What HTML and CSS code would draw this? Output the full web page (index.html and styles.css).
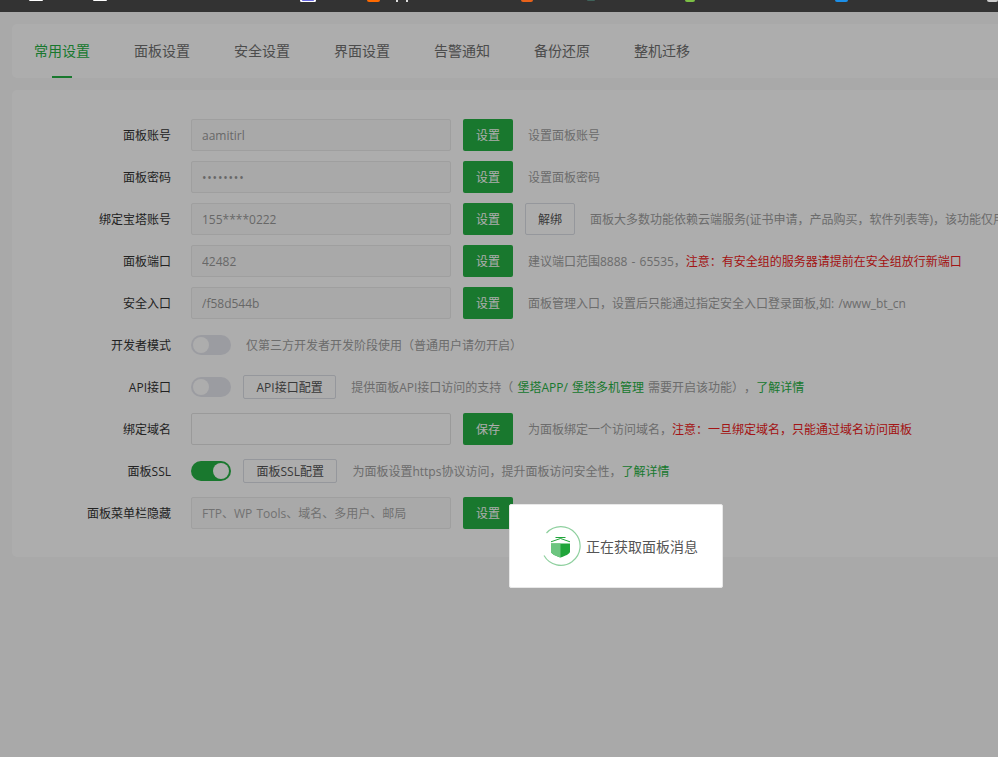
FILE: index.html
```html
<!DOCTYPE html>
<html lang="en">

<head>
    <meta charset="UTF-8">
    <meta name="viewport" content="width=device-width, initial-scale=1.0">
    <title>面板设置</title>
    <link rel="stylesheet" href="styles.css">
</head>

<body>
    <div class="browser-bar">
        <span class="fav fav-white fav-a"></span>
        <span class="fav fav-white fav-b"></span>
        <span class="fav fav-blue"></span>
        <span class="fav fav-orange"></span>
        <span class="fav fav-tick fav-tick-a"></span>
        <span class="fav fav-tick fav-tick-b"></span>
        <span class="fav fav-ring"></span>
        <span class="fav fav-dark"></span>
        <span class="fav fav-green"></span>
        <span class="fav fav-sky"></span>
        <span class="fav fav-grey"></span>
    </div>

    <div class="page">
        <div class="tabs">
            <a class="tab active">常用设置</a>
            <a class="tab">面板设置</a>
            <a class="tab">安全设置</a>
            <a class="tab">界面设置</a>
            <a class="tab">告警通知</a>
            <a class="tab">备份还原</a>
            <a class="tab">整机迁移</a>
        </div>

        <div class="settings">
            <div class="row">
                <label class="row-label">面板账号</label>
                <input class="text-input" value="aamitirl" disabled>
                <button class="btn">设置</button>
                <span class="hint">设置面板账号</span>
            </div>
            <div class="row">
                <label class="row-label">面板密码</label>
                <input class="text-input password" type="password" value="12345678" disabled>
                <button class="btn">设置</button>
                <span class="hint">设置面板密码</span>
            </div>
            <div class="row">
                <label class="row-label">绑定宝塔账号</label>
                <input class="text-input" value="155****0222" disabled>
                <button class="btn">设置</button>
                <button class="btn-plain unbind">解绑</button>
                <span class="hint">面板大多数功能依赖云端服务(证书申请，产品购买，软件列表等)，该功能仅用</span>
            </div>
            <div class="row">
                <label class="row-label">面板端口</label>
                <input class="text-input" value="42482" disabled>
                <button class="btn">设置</button>
                <span class="hint">建议端口范围8888 - 65535，<span class="red">注意：有安全组的服务器请提前在安全组放行新端口</span></span>
            </div>
            <div class="row">
                <label class="row-label">安全入口</label>
                <input class="text-input" value="/f58d544b" disabled>
                <button class="btn">设置</button>
                <span class="hint">面板管理入口，设置后只能通过指定安全入口登录面板,如: /www_bt_cn</span>
            </div>
            <div class="row">
                <label class="row-label">开发者模式</label>
                <span class="switch"></span>
                <span class="hint">仅第三方开发者开发阶段使用（普通用户请勿开启）</span>
            </div>
            <div class="row">
                <label class="row-label">API接口</label>
                <span class="switch"></span>
                <button class="btn-plain">API接口配置</button>
                <span class="hint">提供面板API接口访问的支持（ <span class="green">堡塔APP/ 堡塔多机管理</span> 需要开启该功能），<span class="green">了解详情</span></span>
            </div>
            <div class="row">
                <label class="row-label">绑定域名</label>
                <input class="text-input domain" value="">
                <button class="btn">保存</button>
                <span class="hint">为面板绑定一个访问域名，<span class="red">注意：一旦绑定域名，只能通过域名访问面板</span></span>
            </div>
            <div class="row">
                <label class="row-label">面板SSL</label>
                <span class="switch on"></span>
                <button class="btn-plain">面板SSL配置</button>
                <span class="hint">为面板设置https协议访问，提升面板访问安全性，<span class="green">了解详情</span></span>
            </div>
            <div class="row">
                <label class="row-label">面板菜单栏隐藏</label>
                <input class="text-input" placeholder="FTP、WP Tools、域名、多用户、邮局" disabled>
                <button class="btn">设置</button>
            </div>
        </div>
    </div>

    <div class="overlay"></div>

    <div class="loading-box">
        <svg class="loading-icon" width="40" height="40" viewBox="0 0 40 40">
            <path d="M5.500 7A19.300 19.300 0 1 1 3 29.500" fill="none" stroke="#8fd09f" stroke-width="1.200" />
            <path d="M10 17.500h19v8c0 2.500-5 4.500-9.500 6-4.500-1.500-9.500-3.500-9.500-6z" fill="#20a53a" />
            <path d="M10 17.500h9.500v14c-4.500-1.500-9.500-3.500-9.500-6z" fill="#6cc57f" />
            <path d="M10 15.800l9.500-3.300 9.500 3.300M14.500 11.500h10" fill="none" stroke="#20a53a" stroke-width="1" />
        </svg>
        <span>正在获取面板消息</span>
    </div>
</body>

</html>
```
FILE: styles.css
```css
html,
body {
    margin: 0;
    height: 100%;
    overflow: hidden;
}

body {
    background-color: #fafafa;
    color: #333;
    font-family: "Open Sans", "Noto Sans CJK SC", sans-serif;
    font-size: 12px;
    text-spacing-trim: space-all;
}

.browser-bar {
    position: relative;
    z-index: 2;
    height: 12px;
    background-color: #333;
}

.fav {
    position: absolute;
    top: 0;
    height: 2px;
    border-radius: 0 0 2px 2px;
}

.fav-white { height: 1px; width: 14px; background-color: #fff; }
.fav-a { left: 29px; }
.fav-b { left: 93px; }
.fav-blue { left: 300px; width: 16px; background-color: #6a6ae0; box-shadow: inset 2px 0 #fff, inset -2px 0 #fff, inset 0 -1px #fff; }
.fav-orange { left: 367px; width: 13px; background-color: #ff6a00; }
.fav-tick { width: 2px; background-color: #ddd; border-radius: 0; }
.fav-tick-a { left: 396px; }
.fav-tick-b { left: 406px; }
.fav-ring { left: 521px; width: 12px; background-color: #e8621a; }
.fav-dark { left: 587px; width: 8px; height: 1px; background-color: #3f625a; }
.fav-green { left: 685px; width: 10px; background-color: #7cc045; }
.fav-sky { left: 835px; width: 13px; background-color: #1c8fe8; }
.fav-grey { left: 987px; width: 11px; background-color: #ccc; }

.page {
    padding: 12px 0 0 12px;
}

.tabs {
    display: flex;
    gap: 44px;
    height: 54px;
    padding-left: 22px;
    background-color: #fff;
    border-radius: 5px 0 0 5px;
    font-size: 14px;
    color: #707070;
}

.tab {
    position: relative;
    line-height: 54px;
}

.tab.active {
    color: #26b244;
}

.tab.active::after {
    content: "";
    position: absolute;
    left: 18px;
    right: 18px;
    bottom: 0;
    height: 2px;
    background-color: #26b244;
}

.settings {
    margin-top: 12px;
    padding: 29px 0 28px;
    background-color: #fff;
    border-radius: 5px 0 0 5px;
    display: flex;
    flex-direction: column;
    gap: 10px;
}

.row {
    display: flex;
    align-items: center;
    height: 32px;
    white-space: nowrap;
}

.row > * {
    flex-shrink: 0;
}

.row-label {
    width: 159px;
    margin-right: 20px;
    text-align: right;
    color: #333;
}

.text-input {
    box-sizing: border-box;
    width: 260px;
    height: 32px;
    padding: 0 10px;
    margin-right: 12px;
    background-color: #f9f9f9;
    border: 1px solid #ebebeb;
    border-radius: 2px;
    color: #999;
    font: inherit;
    font-size: 12px;
}

.text-input.password {
    letter-spacing: 0.8px;
}

.text-input.domain {
    background-color: #fff;
    border-color: #e4e4e4;
}

.text-input::placeholder {
    color: #a8a8a8;
    opacity: 1;
    word-spacing: 1px;
}

.btn {
    width: 50px;
    height: 32px;
    padding: 0;
    border: none;
    border-radius: 2px;
    background-color: #26b244;
    color: #fff;
    font: inherit;
    margin-right: 15px;
}

.btn-plain {
    height: 24px;
    padding: 0 12.5px;
    margin-right: 15px;
    background-color: #fff;
    border: 1px solid #dcdfe6;
    border-radius: 2px;
    color: #555;
    font: inherit;
}

.btn-plain.unbind {
    width: 50px;
    height: 32px;
    padding: 0;
    margin-left: -3px;
}

.hint {
    color: #a0a0a0;
    word-spacing: 1px;
}

.switch + .hint {
    margin-left: 3px;
}

.red {
    color: #f02020;
}

.green {
    color: #26b244;
}

.switch {
    position: relative;
    width: 40px;
    height: 20px;
    margin-right: 12px;
    border-radius: 10px;
    background-color: #e5e6ee;
}

.switch::after {
    content: "";
    position: absolute;
    top: 2px;
    left: 2px;
    width: 16px;
    height: 16px;
    border-radius: 50%;
    background-color: #fff;
}

.switch.on {
    background-color: #26b244;
}

.switch.on::after {
    left: 22px;
}

.overlay {
    position: fixed;
    inset: 0;
    background-color: rgba(0, 0, 0, 0.32);
}

.loading-box {
    position: fixed;
    top: 504px;
    left: 509px;
    box-sizing: border-box;
    width: 214px;
    height: 84px;
    padding-left: 31px;
    display: flex;
    align-items: center;
    gap: 5px;
    background-color: #fff;
    border: 1px solid #e8e8e8;
    border-radius: 2px;
    color: #555;
    font-size: 14px;
}
```
